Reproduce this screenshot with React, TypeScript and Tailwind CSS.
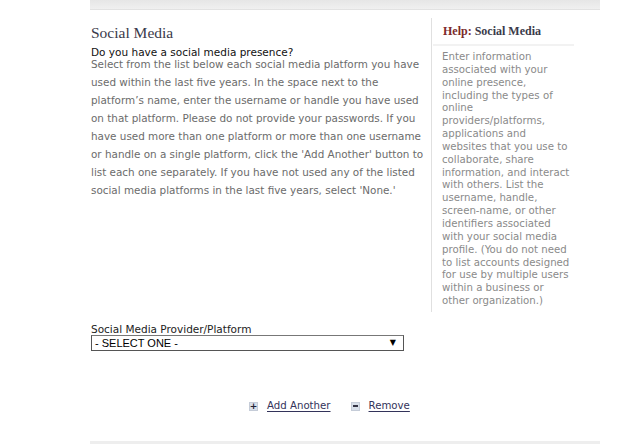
const helpLines = [
  'Enter information',
  'associated with your',
  'online presence,',
  'including the types of',
  'online',
  'providers/platforms,',
  'applications and',
  'websites that you use to',
  'collaborate, share',
  'information, and interact',
  'with others. List the',
  'username, handle,',
  'screen-name, or other',
  'identifiers associated',
  'with your social media',
  'profile. (You do not need',
  'to list accounts designed',
  'for use by multiple users',
  'within a business or',
  'other organization.)',
];

export default function App() {
  const verdana = { fontFamily: '"DejaVu Sans", Verdana, sans-serif' };
  return (
    <div className="w-[624px] h-[445px] bg-white overflow-hidden">
      <div className="ml-[90px] w-[510px]">
        <div className="h-[10px] bg-gradient-to-b from-[#e6e6e6] to-[#f0f0f0] border-b border-[#e2e2e2]" />
        <div className="flex">
          <div className="w-[341px] pl-[1px] pt-[14px] h-[341px] flex flex-col" style={verdana}>
            <h2 className="text-[15.5px] leading-[18px] text-[#3a3a4a]" style={{ fontFamily: '"Liberation Serif", Georgia, serif' }}>
              Social Media
            </h2>
            <p className="mt-[4px] text-[10.5px] leading-[13px] text-[#111]">Do you have a social media presence?</p>
            <p className="text-[10.4px] leading-[18px] text-[#6b6b6b] mt-[-4px]">
              Select from the list below each social media platform you have used within the last five years. In the space next to the platform’s name, enter the username or handle you have used on that platform. Please do not provide your passwords. If you have used more than one platform or more than one username or handle on a single platform, click the 'Add Another' button to list each one separately. If you have not used any of the listed social media platforms in the last five years, select 'None.'
            </p>
            <div className="mt-auto">
              <label className="block text-[10.5px] leading-[12px] text-[#222]">Social Media Provider/Platform</label>
              <div className="w-[313px] h-[16px] border border-[#555] border-t-[#777] flex items-center justify-between pl-[3px] pr-[7px] bg-white">
                <span className="text-[11px] leading-[14px] text-black" style={{ fontFamily: '"Liberation Sans", Arial, sans-serif' }}>- SELECT ONE -</span>
                <span className="text-[8px] text-black leading-none">▼</span>
              </div>
            </div>
          </div>
          <div className="w-[169px] pt-[8px]">
            <div className="border-l border-[#e0e0e0] h-[294px]">
              <div className="ml-[1px] w-[141px] border-b-2 border-[#f2f2f2] pl-[10px] pt-[6px] pb-[5px] text-[12px] leading-[15px] font-bold" style={{ fontFamily: '"Liberation Serif", Georgia, serif' }}>
                <span className="text-[#7b2b2b]">Help:</span> <span className="text-[#3a3a4a]">Social Media</span>
              </div>
              <div className="ml-[10px] pt-[5px] text-[10.2px] leading-[12.85px] text-[#8a8a8a]" style={verdana}>
                {helpLines.map((line) => (
                  <div key={line} className="whitespace-nowrap">{line}</div>
                ))}
              </div>
            </div>
          </div>
        </div>
        <div className="mt-[41px] flex items-center pl-[159px] h-[28px]" style={verdana}>
          <span className="w-[9px] h-[9px] bg-[#d9e0ea] border border-[#c5ccd8] flex items-center justify-center text-[9px] leading-none text-[#223] font-bold">+</span>
          <a className="ml-[9px] text-[10.2px] text-[#33335a] underline underline-offset-2">Add Another</a>
          <span className="ml-[20px] w-[9px] h-[9px] bg-[#d9e0ea] border border-[#c5ccd8] flex items-center justify-center">
            <span className="w-[5px] h-[2px] bg-[#334]" />
          </span>
          <a className="ml-[9px] text-[10.2px] text-[#33335a] underline underline-offset-2">Remove</a>
        </div>
        <div className="mt-[21px] h-[3px] bg-[#eeeeee]" />
      </div>
    </div>
  );
}
